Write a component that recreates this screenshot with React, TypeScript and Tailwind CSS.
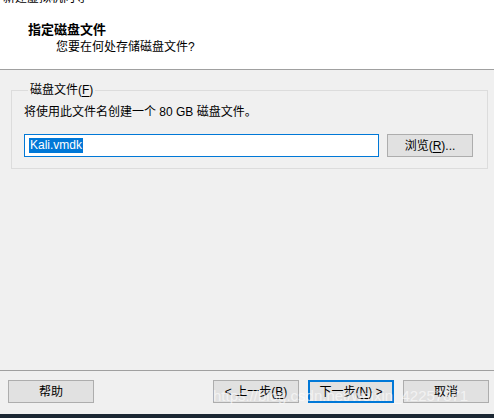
const font = "font-['Liberation_Sans','Noto_Sans_CJK_SC',sans-serif]"

function WinButton({ label, accel, prefix, suffix, primary }: { label: string; accel?: string; prefix?: string; suffix?: string; primary?: boolean }) {
  return (
    <button
      className={
        primary
          ? 'w-[86px] h-[23px] bg-[#e1e1e1] border-2 border-[#0078d7] text-[12px] leading-none text-black flex items-center justify-center'
          : 'w-[86px] h-[23px] bg-[#e1e1e1] border border-[#adadad] text-[12px] leading-none text-black flex items-center justify-center'
      }
    >
      {prefix}
      {label}
      {accel && (
        <>
          (<span className="underline underline-offset-2">{accel}</span>)
        </>
      )}
      {suffix}
    </button>
  )
}

export default function App() {
  return (
    <div className={`relative w-[494px] h-[418px] overflow-hidden flex flex-col bg-[#f0f0f0] text-black ${font}`}>
      {/* header */}
      <div className="h-[70px] bg-white border-b border-[#a0a0a0] flex flex-col">
        <div className="h-[4px] overflow-hidden pl-[3px]">
          <div className="-mt-[9px] text-[12px] leading-[14px]">新建虚拟机向导</div>
        </div>
        <div className="pl-[28px] pt-[18px] text-[13px] leading-[16px] font-bold">指定磁盘文件</div>
        <div className="pl-[56px] pt-[1px] text-[12px] leading-[16px]">您要在何处存储磁盘文件?</div>
      </div>

      {/* body */}
      <div className="flex-1 px-[11px] pt-[12px]">
        <fieldset className="w-[477px] border border-[#dcdcdc] px-[12px] pb-[11px]">
          <legend className="ml-[4px] px-[2px] text-[12px] leading-[16px]">
            磁盘文件(<span className="underline underline-offset-2">F</span>)
          </legend>
          <div className="pt-[6px] text-[12px] leading-[16px]">将使用此文件名创建一个 80 GB 磁盘文件。</div>
          <div className="mt-[14px] flex items-center gap-[8px]">
            <div className="w-[355px] h-[23px] bg-white border border-[#0078d7] flex items-center pl-[4px]">
              <span className="bg-[#0078d7] text-white text-[12px] leading-[15px] px-[1px]">Kali.vmdk</span>
            </div>
            <WinButton label="浏览" accel="R" suffix="..." />
          </div>
        </fieldset>
      </div>

      {/* footer */}
      <div className="h-[44px] border-t border-[#a0a0a0] flex items-start pt-[9px] pl-[8px] pr-[5px]">
        <WinButton label="帮助" />
        <div className="flex-1" />
        <div className="flex gap-[9px]">
          <WinButton prefix="< " label="上一步" accel="B" />
          <WinButton label="下一步" accel="N" suffix=" >" primary />
          <WinButton label="取消" />
        </div>
      </div>
      <div className="h-[4px] bg-[#1c2733]" />

      {/* watermark */}
      <div className="absolute left-[213px] top-[385px] text-[15px] leading-[22px] whitespace-nowrap text-white/60 font-['Liberation_Sans',sans-serif] pointer-events-none">
        https://blog.csdn.net/weixin_42257871
      </div>
    </div>
  )
}
